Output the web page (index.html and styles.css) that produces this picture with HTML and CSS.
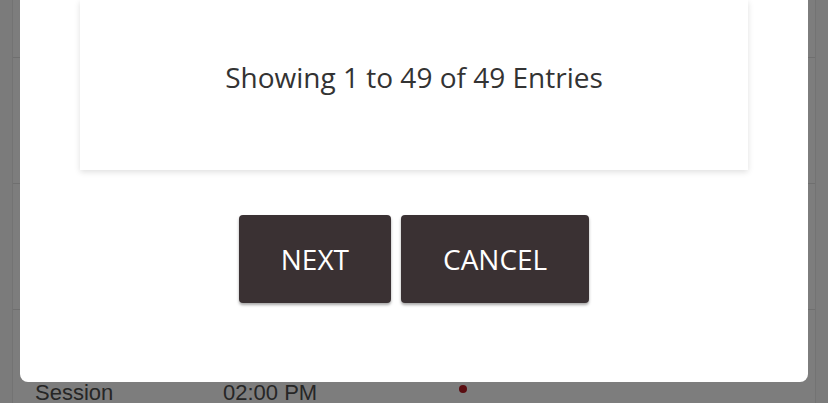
FILE: index.html
```html
<!DOCTYPE html>
<html lang="en">
<head>
<meta charset="UTF-8">
<meta name="viewport" content="width=device-width, initial-scale=1.0">
<title>Entries</title>
<link rel="stylesheet" href="styles.css">
</head>
<body>
<div class="page">
  <div class="row first"></div>
  <div class="row"></div>
  <div class="row"></div>
  <div class="row last">
    <span class="cell name">Session</span>
    <span class="cell time">02:00 PM</span>
    <span class="dot"></span>
  </div>
</div>

<div class="overlay">
  <div class="modal">
    <div class="card">
      <p class="count">Showing 1 to 49 of 49 Entries</p>
    </div>
    <div class="actions">
      <button class="btn">NEXT</button>
      <button class="btn">CANCEL</button>
    </div>
  </div>
</div>
</body>
</html>
```

FILE: styles.css
```css
body {
  margin: 0;
  height: 403px;
  overflow: hidden;
  background-color: #7b7b7b;
  font-family: "Liberation Sans", Arial, sans-serif;
}

/* page behind the dimmed overlay */
.page {
  margin: 0 12px;
  border-left: 1px solid #737373;
  border-right: 1px solid #737373;
  background-color: #7d7d7d;
}

.row {
  height: 125px;
  border-bottom: 1px solid #6f6f6f;
}

.row.first {
  height: 57px;
}

.row.last {
  height: 94px;
  border-bottom: none;
  display: flex;
  align-items: flex-start;
  padding-top: 70px;
  box-sizing: border-box;
  color: #262626;
  font-size: 22px;
}

.cell.name {
  margin-left: 22px;
  width: 188px;
}

.cell.time {
  width: 236px;
}

.dot {
  width: 8px;
  height: 8px;
  margin-top: 5px;
  border-radius: 50%;
  background-color: #5a0c10;
}

/* modal */
.overlay {
  position: fixed;
  top: 0;
  left: 0;
  right: 0;
  bottom: 0;
}

.modal {
  margin: 0 20px;
  padding: 0 60px 79px;
  background-color: #fff;
  border-radius: 0 0 8px 8px;
  font-family: "Open Sans", sans-serif;
}

.card {
  height: 170px;
  background-color: #fff;
  box-shadow: 0 2px 6px rgba(0, 0, 0, 0.13);
  text-align: center;
  overflow: hidden;
}

.count {
  margin: 57px 0 0;
  line-height: 40px;
  font-size: 28px;
  color: #333;
}

.actions {
  display: flex;
  justify-content: center;
  gap: 10px;
  margin-top: 45px;
}

.btn {
  height: 88px;
  padding: 0 42px;
  border: none;
  border-radius: 4px;
  background-color: #3a3133;
  color: #fff;
  font-family: "Open Sans", sans-serif;
  font-size: 28px;
  box-shadow: 0 2px 3px rgba(0, 0, 0, 0.35);
  cursor: pointer;
}
```
